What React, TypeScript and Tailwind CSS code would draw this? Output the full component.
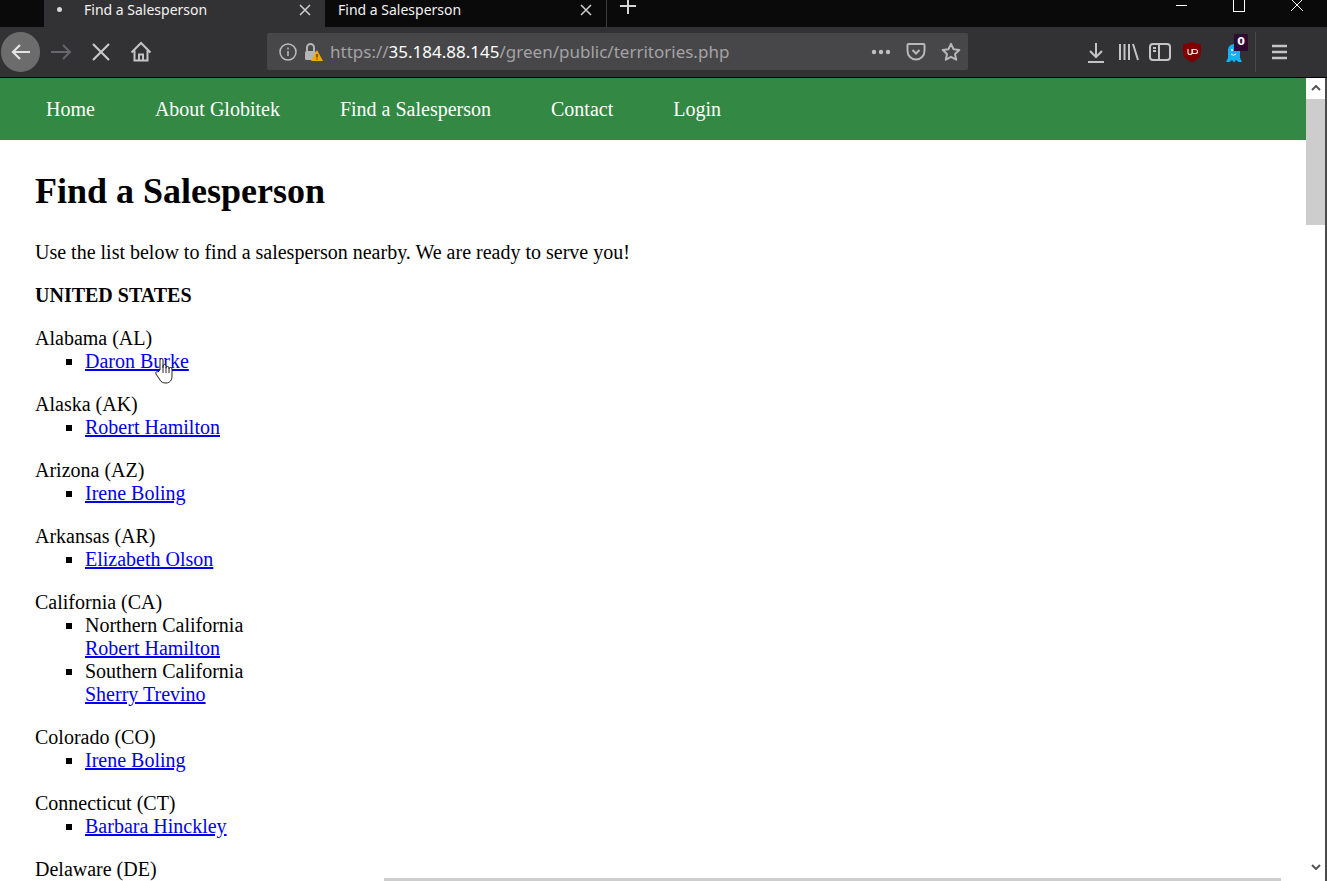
import React from "react";

const serif = "font-['Liberation_Serif',serif]";
const ui = "font-['Noto_Sans',sans-serif]";

const navLinks = ["Home", "About Globitek", "Find a Salesperson", "Contact", "Login"];

type Territory = {
  name: string;
  people: { area?: string; person: string }[];
};

const territories: Territory[] = [
  { name: "Alabama (AL)", people: [{ person: "Daron Burke" }] },
  { name: "Alaska (AK)", people: [{ person: "Robert Hamilton" }] },
  { name: "Arizona (AZ)", people: [{ person: "Irene Boling" }] },
  { name: "Arkansas (AR)", people: [{ person: "Elizabeth Olson" }] },
  {
    name: "California (CA)",
    people: [
      { area: "Northern California", person: "Robert Hamilton" },
      { area: "Southern California", person: "Sherry Trevino" },
    ],
  },
  { name: "Colorado (CO)", people: [{ person: "Irene Boling" }] },
  { name: "Connecticut (CT)", people: [{ person: "Barbara Hinckley" }] },
  { name: "Delaware (DE)", people: [{ person: "Daron Burke" }] },
];

const Tab = ({ dot }: { dot?: boolean }) => (
  <div
    className={
      "flex h-[27px] w-[281px] shrink-0 items-center pb-[8px] " +
      (dot ? "bg-[#323234] pl-[13px]" : "pl-[13px]")
    }
  >
    {dot ? <span className="mr-[22px] h-[5px] w-[5px] rounded-full bg-[#d8d8d8]" /> : null}
    <span className={`${ui} text-[14px] leading-[18px] text-[#f2f2f2]`}>Find a Salesperson</span>
    <svg className="ml-auto mr-[14px]" width="12" height="12" viewBox="0 0 12 12" stroke="#cfcfcf" strokeWidth="1.5" fill="none">
      <path d="M1 1l10 10M11 1L1 11" />
    </svg>
  </div>
);

const ToolIcon = ({ children, size = 24 }: { children: React.ReactNode; size?: number }) => (
  <svg width={size} height={size} viewBox="0 0 24 24" fill="none" stroke="#c4c4c4" strokeWidth="2" className="shrink-0">
    {children}
  </svg>
);

const TabBar = () => (
  <div className="flex h-[27px] shrink-0 items-start overflow-hidden bg-[#0a0a0a] pl-[44px]">
    <Tab dot />
    <Tab />
    <div className="h-[27px] w-px bg-[#3c3c3c]" />
    <svg className="ml-[12px] mt-[-3px]" width="18" height="18" viewBox="0 0 18 18" stroke="#d4d4d4" strokeWidth="2" fill="none">
      <path d="M9 1v16M1 9h16" />
    </svg>
    <div className="ml-auto flex h-[20px] items-start">
      <div className="mr-[46px] mt-[5px] h-px w-[11px] bg-white" />
      <div className="mr-[45px] mt-[-5px] h-[17px] w-[12px] border border-white" />
      <svg className="mr-[23px] mt-[-2px]" width="14" height="14" viewBox="0 0 14 14" stroke="#fff" strokeWidth="1" fill="none">
        <path d="M1 1l12 12M13 1L1 13" />
      </svg>
    </div>
  </div>
);

const Toolbar = () => (
  <div className="flex h-[51px] shrink-0 items-center border-b border-b-black bg-[#323234] pb-[1px]">
    <div className="ml-[1px] flex h-[40px] w-[39px] items-center justify-center rounded-full bg-[#6c6c6d]">
      <ToolIcon>
        <path d="M21 12H4M11 5l-7 7 7 7" stroke="#e4e4e4" strokeWidth="2.2" />
      </ToolIcon>
    </div>
    <div className="ml-[9px]">
      <ToolIcon>
        <path d="M2 12h19M14 5l7 7-7 7" stroke="#66666c" strokeWidth="2" />
      </ToolIcon>
    </div>
    <div className="ml-[16px]">
      <ToolIcon>
        <path d="M4 4l16 16M20 4L4 20" stroke="#c8c8c8" strokeWidth="2.2" />
      </ToolIcon>
    </div>
    <div className="ml-[16px]">
      <ToolIcon>
        <path d="M2.5 12.5L12 3l9.5 9.5M5.5 10.5V20.5h13V10.5M10 20.5v-6h4v6" />
      </ToolIcon>
    </div>

    <div className="ml-[114px] flex h-[37px] w-[701px] items-center rounded-[2px] bg-[#474749] pl-[12px] pr-[7px]">
      <svg width="18" height="18" viewBox="0 0 18 18" fill="none" stroke="#bdbdbd" strokeWidth="1.5" className="shrink-0">
        <circle cx="9" cy="9" r="8" />
        <path d="M9 8v5M9 4.5v2" />
      </svg>
      <div className="relative ml-[6px] h-[20px] w-[20px] shrink-0">
        <svg width="20" height="20" viewBox="0 0 20 20" fill="none" className="absolute left-0 top-0">
          <path d="M4 9V5.5a3.5 3.5 0 0 1 7 0V9" stroke="#b5b5b5" strokeWidth="2" />
          <rect x="2" y="9" width="11" height="9" rx="1.5" fill="#b5b5b5" />
          <path d="M14 8l6 11H8z" fill="#f5a800" />
          <path d="M14 12v3.5M14 16.5v1" stroke="#3a2a00" strokeWidth="1.2" />
        </svg>
      </div>
      <span className={`${ui} ml-[7px] whitespace-nowrap text-[17px] leading-[22px] text-[#a3a3a5]`}>
        https://<span className="text-white">35.184.88.145</span>/green/public/territories.php
      </span>
      <div className="ml-auto flex items-center">
        <svg width="20" height="6" viewBox="0 0 20 6" fill="#c0c0c0">
          <circle cx="3" cy="3" r="2.2" />
          <circle cx="10" cy="3" r="2.2" />
          <circle cx="17" cy="3" r="2.2" />
        </svg>
        <svg className="ml-[15px]" width="20" height="20" viewBox="0 0 20 20" fill="none" stroke="#b8b8b8" strokeWidth="2">
          <path d="M2.5 2h15a1 1 0 0 1 1 1v6a8.500 8.500 0 0 1-17 0V3a1 1 0 0 1 1-1z" />
          <path d="M6.500 8l3.500 3.500L13.500 8" />
        </svg>
        <svg className="ml-[15px]" width="20" height="20" viewBox="0 0 20 20" fill="none" stroke="#b8b8b8" strokeWidth="2" strokeLinejoin="round">
          <path d="M10 1.800l2.500 5.400 5.800.7-4.300 4 1.200 5.800L10 14.800l-5.200 2.900L6 11.900l-4.300-4 5.800-.7z" />
        </svg>
      </div>
    </div>

    <div className="ml-[116px]">
      <ToolIcon>
        <path d="M12 3v14M6 11l6 6 6-6M4 22h16" />
      </ToolIcon>
    </div>
    <div className="ml-[8px]">
      <ToolIcon>
        <path d="M4 4v16M8.500 4v16M13 4v16M17 4l5 16" />
      </ToolIcon>
    </div>
    <div className="ml-[8px]">
      <ToolIcon>
        <rect x="2" y="4" width="20" height="16" rx="3" />
        <path d="M11 4v16M5 8h3M5 11h3" />
      </ToolIcon>
    </div>
    <svg className="ml-[10px] shrink-0" width="20" height="22" viewBox="0 0 20 22">
      <path d="M10 1l9 2.500v8c0 4.500-4 7.500-9 9.500-5-2-9-5-9-9.500v-8z" fill="#800000" />
      <path d="M6 8v3.500a2 2 0 0 0 4 0V8M10.500 12.500h3a1.500 1.500 0 0 0 0-4h-3z" fill="none" stroke="#f0dede" strokeWidth="1.200" />
    </svg>
    <div className="relative ml-[21px] h-[22px] w-[22px] shrink-0">
      <svg width="16" height="20" viewBox="0 0 16 20" className="absolute left-[3px] top-[2px]">
        <path d="M8 1a6 6 0 0 1 6 6v8l2 4h-3.500L10 17l-2 2.500L6 17l-2.500 2H0l2-4V7a6 6 0 0 1 6-6z" fill="#12b3f5" />
        <circle cx="6" cy="7" r="1" fill="#fff" />
        <path d="M5 11a3.500 3.500 0 0 0 5 0" stroke="#fff" fill="none" />
      </svg>
      <div className="absolute left-[11px] top-[-7px] flex h-[17px] w-[14px] items-center justify-center bg-[#2e0a33] font-['DejaVu_Sans',sans-serif] text-[11px] font-bold text-white">
        0
      </div>
    </div>
    <div className="ml-[10px] h-[40px] w-px bg-[#4a4a4c]" />
    <div className="ml-[12px]">
      <ToolIcon>
        <path d="M4 6h15M4 12h15M4 18h15" strokeWidth="2.400" />
      </ToolIcon>
    </div>
  </div>
);

const Page = () => (
  <div className={`${serif} relative min-w-0 flex-1 overflow-hidden bg-white text-[20px] leading-[23px] text-black`}>
    <nav className="flex h-[62px] items-center bg-[#338843] pl-[16px] text-white">
      {navLinks.map((link) => (
        <span key={link} className="whitespace-nowrap px-[30px]">
          {link}
        </span>
      ))}
    </nav>
    <main className="pl-[35px]">
      <h1 className="mt-[28px] text-[36px] font-bold leading-[46px]">Find a Salesperson</h1>
      <p className="mt-[27px]">Use the list below to find a salesperson nearby. We are ready to serve you!</p>
      <p className="mt-[20px] font-bold">UNITED STATES</p>
      {territories.map((t) => (
        <div key={t.name} className="mt-[20px]">
          {t.name}
          <ul className="list-[square] pl-[50px]">
            {t.people.map((p) => (
              <li key={p.person}>
                {p.area ? <div>{p.area}</div> : null}
                <a href="#" className="text-[#0000ee] underline">
                  {p.person}
                </a>
              </li>
            ))}
          </ul>
        </div>
      ))}
    </main>
    {/* hand cursor over first link */}
    <svg className="absolute left-[155px] top-[279px]" width="19" height="27" viewBox="0 0 19 27" fill="#fff" stroke="#222" strokeWidth="1">
      <path d="M5 13V3a1.500 1.500 0 0 1 3 0v8l0-2a1.500 1.500 0 0 1 3 0v2a1.500 1.500 0 0 1 3 0v1a1.500 1.500 0 0 1 3 0v7c0 4-2 7-6 7-3 0-5-1-6-3l-4-6c-1-2 1-3 2-2z" />
      <path d="M8 11v5M11 11v5M14 12v4" />
    </svg>
    {/* horizontal scrollbar thumb */}
    <div className="absolute bottom-0 left-[384px] h-[3px] w-[897px] bg-[#cdcdcd]" />
  </div>
);

const Scrollbar = () => (
  <div className="flex w-[21px] shrink-0 border-r-2 border-r-[#4a4a4a] bg-white">
    <div className="flex w-[19px] flex-col items-center">
      <svg className="mt-[7px]" width="10" height="6" viewBox="0 0 10 6" fill="none" stroke="#555" strokeWidth="2">
        <path d="M1 5l4-4 4 4" />
      </svg>
      <div className="mt-[8px] h-[126px] w-[19px] bg-[#cdcdcd]" />
      <svg className="mt-auto mb-[11px]" width="10" height="6" viewBox="0 0 10 6" fill="none" stroke="#555" strokeWidth="2">
        <path d="M1 1l4 4 4-4" />
      </svg>
    </div>
  </div>
);

export default function App() {
  return (
    <div className="flex h-[881px] w-[1327px] flex-col overflow-hidden bg-white">
      <TabBar />
      <Toolbar />
      <div className="flex min-h-0 flex-1">
        <Page />
        <Scrollbar />
      </div>
    </div>
  );
}
